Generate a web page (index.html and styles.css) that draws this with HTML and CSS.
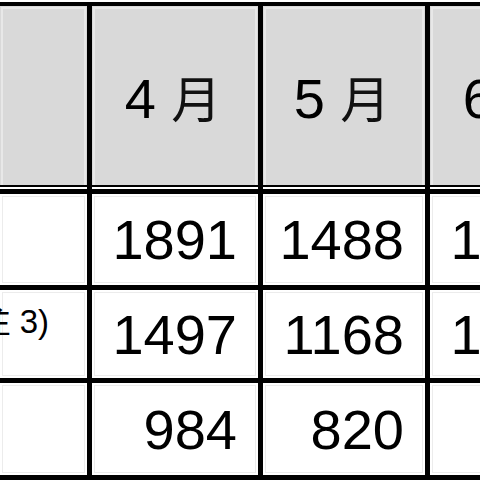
FILE: index.html
```html
<!DOCTYPE html>
<html lang="ja">
<head>
<meta charset="utf-8">
<title>月別件数</title>
<link rel="stylesheet" href="styles.css">
</head>
<body>
<div class="sheet">
  <div class="grid">
    <div class="cell head label"></div>
    <div class="cell head"><span class="month">4 <span class="kanji">月</span></span></div>
    <div class="cell head"><span class="month">5 <span class="kanji">月</span></span></div>
    <div class="cell head"><span class="month">6 <span class="kanji">月</span></span></div>

    <div class="cell label r1"></div>
    <div class="cell num r1">1891</div>
    <div class="cell num r1">1488</div>
    <div class="cell num r1">1623</div>

    <div class="cell label r2"><span class="note">注 3)</span></div>
    <div class="cell num r2">1497</div>
    <div class="cell num r2">1168</div>
    <div class="cell num r2">1274</div>

    <div class="cell label r3"></div>
    <div class="cell num r3">984</div>
    <div class="cell num r3">820</div>
    <div class="cell num r3">905</div>
  </div>
</div>
</body>
</html>
```

FILE: styles.css
```css
html, body {
  margin: 0;
  padding: 0;
  background: #ffffff;
  overflow: hidden;
}

.sheet {
  padding-top: 2px;
  font-family: "Liberation Sans", "Noto Sans CJK JP", sans-serif;
  color: #000;
}

.grid {
  display: grid;
  width: 596px;
  grid-template-columns: 87px 166px 162px 166px;
  grid-template-rows: 183px 91px 88px 92px;
  gap: 5px;
  background: #000;
  border-top: 4px solid #000;
  border-bottom: 5px solid #000;
}

.cell {
  background: #fff;
  display: flex;
  align-items: center;
  font-size: 56px;
  white-space: nowrap;
  overflow: hidden;
  box-shadow: inset 0 0 0 2px #fff, inset 0 0 0 3px #ececec;
}

.head {
  background: #d9d9d9;
  justify-content: center;
  padding-bottom: 4px;
  padding-right: 4px;
  box-shadow: inset 0 -2px 0 #fff, inset 0 -4px 0 #000, inset 0 0 0 1px #d9d9d9, inset 0 0 0 3px #e8e8e8;
}

.month {
  white-space: pre;
}

.kanji {
  font-size: 50px;
  color: #111;
}

.num {
  justify-content: flex-end;
  padding-right: 21px;
}

.label {
  justify-content: flex-end;
}

.r2.label {
  align-items: flex-start;
  padding-top: 13px;
  padding-right: 38px;
}

.note {
  font-size: 33px;
  line-height: 38px;
}
```
